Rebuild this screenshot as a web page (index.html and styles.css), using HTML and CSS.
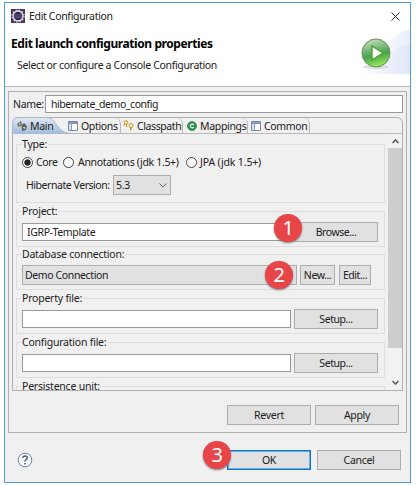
FILE: index.html
```html
<!DOCTYPE html>
<html lang="en">
<head>
<meta charset="utf-8">
<title>Edit Configuration</title>
<link rel="stylesheet" href="styles.css">
</head>
<body>
<main class="window">
  <header class="header">
    <div class="titlebar">
      <svg class="app-icon" width="14" height="14" viewBox="0 0 14 14"><rect width="14" height="14" fill="#49345f"/><circle cx="7" cy="7" r="5" fill="#302b50" stroke="#eee8ef" stroke-width="1.3"/><circle cx="7" cy="7" r="6" fill="none" stroke="#cfc4d3" stroke-width="1.4" stroke-dasharray="1.4 1.74"/><path d="M3.5 5.8h7M3 7.2h8M3.5 8.6h7" stroke="#77739a" stroke-width=".6"/></svg>
      <span class="title">Edit Configuration</span>
      <svg class="close" width="9" height="9" viewBox="0 0 9 9"><path d="M.5.5l8 8M8.5.5l-8 8" stroke="#222" stroke-width="1"/></svg>
    </div>
    <h1>Edit launch configuration properties</h1>
    <p>Select or configure a Console Configuration</p>
    <svg class="banner" width="52" height="48" viewBox="0 0 52 48">
      <defs>
        <linearGradient id="sky" x1="0" x2="1"><stop stop-color="#fff"/><stop offset="1" stop-color="#dfe7f7"/></linearGradient>
        <linearGradient id="ball" x1="0" y1="0" x2="0.25" y2="1"><stop stop-color="#d1e6c9"/><stop offset=".45" stop-color="#77b779"/><stop offset=".65" stop-color="#45a34d"/><stop offset="1" stop-color="#91df5c"/></linearGradient>
        <linearGradient id="arc" x1="0" x2="1"><stop stop-color="#f8fafe"/><stop offset="1" stop-color="#e9effa"/></linearGradient>
      </defs>
      <path d="M17 46Q27 6 52 1v45z" fill="url(#arc)"/>
      <path d="M1 46Q28 39 36 23 42 16 52 16v30z" fill="url(#sky)"/>
      <ellipse cx="18" cy="39" rx="13" ry="2" fill="#dbe0df"/>
      <circle cx="18" cy="25" r="14" fill="url(#ball)" stroke="#688b5a"/>
      <path d="M14 18v14l11-7z" fill="#fff" stroke="#4ca52b" stroke-width="1.4"/>
    </svg>
  </header>

  <section class="panel">
    <div class="name-row"><label class="name-label">Name:</label><div class="input name-input"><span class="name-value">hibernate_demo_config</span></div></div>
    <div class="folder">
      <nav class="tabs">
        <div class="tab main-tab">
          <svg class="tab-shape" width="60" height="17" viewBox="0 0 60 17"><defs><linearGradient id="tab" x2="0" y2="1"><stop stop-color="#dfe9f5"/><stop offset="1" stop-color="#9fbbdc"/></linearGradient></defs><path d="M0 17V6Q0 1 6 .5H34C46 1 43 16 60 16.5z" fill="url(#tab)"/><path d="M.5 17V6Q1 1 6 .5H34C46 1 43 16 60 16.5" fill="none" stroke="#b1b5ba"/></svg>
          <svg class="ico ico-main" width="10" height="10" viewBox="0 0 10 10"><path d="M1 2l3-2 1 4-3 2-2-2z" fill="#6f7070"/><path d="M4.5 4.5L7 2l3 3-1 4-4 1z" fill="#5f6262"/><path d="M2 2.5l1 1M6.5 6l1.5 1.5" stroke="#eadda5" stroke-width="1.5"/></svg>
          <span class="t-main">Main</span>
        </div>
        <div class="tab options-tab"><svg class="ico" width="10" height="10" viewBox="0 0 10 10"><path d="M.5.5h9v9h-9z" fill="#fff" stroke="#7b8aa2"/><path d="M1 1h8v2H1z" fill="#819bc5"/><path d="M1 3h2.5v6H1z" fill="#d7e1ef"/><path d="M3.5 3v6" stroke="#8ba0bd"/></svg><span class="t-options">Options</span></div>
        <div class="tab classpath-tab"><svg class="ico" width="11" height="11" viewBox="0 0 11 11"><g fill="#fff2be" stroke="#cb922c"><path d="M2.5 3.5L.5 6M3.5 4v3"/><circle cx="3" cy="2.5" r="1.8"/><path d="M7.5 7v3.5M8.5 7v2"/><circle cx="8" cy="5.5" r="2"/></g></svg><span class="t-classpath">Classpath</span></div>
        <div class="tab mappings-tab"><svg class="ico" width="10" height="10" viewBox="0 0 10 10"><circle cx="5" cy="5" r="4.5" fill="#2f944f" stroke="#277c42" stroke-width=".7"/><path d="M6.8 3.8Q5.2 2.4 3.8 3.8 2.8 5 3.8 6.2 5.2 7.5 6.8 6.2" fill="none" stroke="#fff" stroke-width="1.1"/></svg><span class="t-mappings">Mappings</span></div>
        <div class="tab common-tab"><svg class="ico" width="10" height="10" viewBox="0 0 10 10"><path d="M.5.5h9v9h-9z" fill="#fff" stroke="#7b8aa2"/><path d="M1 1h8v2H1z" fill="#819bc5"/><path d="M1 3h2.5v6H1z" fill="#d7e1ef"/><path d="M3.5 3v6" stroke="#8ba0bd"/></svg><span class="t-common">Common</span></div>
      </nav>
      <div class="viewport">
        <div class="content">
          <section class="group type-group"><h2>Type:</h2>
            <div class="radios"><i class="radio checked"></i><span class="r-core">Core</span><i class="radio"></i><span class="r-ann">Annotations (jdk 1.5+)</span><i class="radio"></i><span class="r-jpa">JPA (jdk 1.5+)</span></div>
            <div class="version"><span class="version-label">Hibernate Version:</span><div class="select"><span>5.3</span><svg width="8" height="5" viewBox="0 0 8 5"><path d="M.5.5L4 4 7.5.5" fill="none" stroke="#666"/></svg></div></div>
          </section>
          <section class="group project"><h2>Project:</h2><div class="row"><div class="input project-input"><span class="project-value">IGRP-Template</span></div><div class="button browse"><span>Browse...</span></div></div></section>
          <section class="group database"><h2>Database connection:</h2><div class="row"><div class="combo"><span>Demo Connection</span></div><div class="button new"><span>New...</span></div><div class="button edit"><span>Edit...</span></div></div></section>
          <section class="group"><h2>Property file:</h2><div class="row"><div class="input file-input"></div><div class="button setup"><span>Setup...</span></div></div></section>
          <section class="group"><h2>Configuration file:</h2><div class="row"><div class="input file-input"></div><div class="button setup"><span>Setup...</span></div></div></section>
          <section class="group"><h2>Persistence unit:</h2></section>
        </div>
        <div class="scrollbar"><svg width="7" height="5" viewBox="0 0 7 5"><path d="M.5 4L3.5 1l3 3" fill="none" stroke="#555" stroke-width="1.5"/></svg><div class="thumb"></div><svg class="down" width="7" height="5" viewBox="0 0 7 5"><path d="M.5 1l3 3 3-3" fill="none" stroke="#555" stroke-width="1.5"/></svg></div>
      </div>
    </div>
    <div class="panel-actions"><div class="button action"><span>Revert</span></div><div class="button action"><span>Apply</span></div></div>
  </section>
  <footer class="footer">
    <svg width="16" height="16" viewBox="0 0 16 16"><circle cx="8" cy="8" r="6.8" fill="#f7f8fa" stroke="#75849c"/><path d="M5.7 6Q6 3.9 8 3.9 10.4 4 10.3 6 10 7 8.8 7.8 8 8.3 8 9.5" fill="none" stroke="#53647e" stroke-width="1.5"/><circle cx="8" cy="11.7" r=".9" fill="#53647e"/></svg>
    <div class="button ok"><span>OK</span></div><div class="button cancel"><span>Cancel</span></div>
  </footer>
  <span class="badge badge-one">1</span><span class="badge badge-two">2</span><span class="badge badge-three">3</span>
</main>
</body>
</html>
```
FILE: styles.css
```css
* { box-sizing: border-box; }
body { margin: 0; padding: 2px 0 0 4px; height: 486px; overflow: hidden; background: #fff; color: #202020; font: 10.5px/14px "Noto Sans", "Open Sans", sans-serif; letter-spacing: -.33px; white-space: nowrap; }
h1, h2, p { margin: 0; }
svg { display: block; flex: none; }
.window { position: relative; width: 407px; height: 481px; border: 1px solid #4e9edb; background: #f0f0f0; }
.header { position: relative; height: 84px; background: #fff; border-bottom: 1px solid #b8b8b8; }
.titlebar { display: flex; align-items: center; padding: 6px 10px 0 6px; height: 20px; }
.title { margin-left: 4px; }
.close { margin-left: auto; }
h1 { font-size: 12px; line-height: 16px; padding: 13px 0 0 6px; color: #000; letter-spacing: -.42px; }
.header p { padding: 6px 0 0 12px; }
.banner { position: absolute; right: 0; top: 25px; }
.panel { margin: 4px 3px 0; height: 342px; border: 1px solid #b0b0b0; padding: 3px; }
.name-row { display: flex; align-items: center; height: 18px; padding-left: 1px; }
.name-label { width: 32px; }
.input { display: flex; align-items: center; background: #fff; border: 1px solid #999; height: 18px; }
.name-input { width: 359px; padding-left: 5px; letter-spacing: -.45px; }
.folder { width: 391px; height: 274px; margin-top: 4px; border: 1px solid #b0b0b0; border-radius: 6px 6px 0 0; }
.tabs { display: flex; height: 16px; border-bottom: 1px solid #b8b8b8; }
.tab { display: flex; align-items: center; position: relative; border-right: 1px solid #b8b8b8; border-top-right-radius: 6px; height: 15px; }
.main-tab { width: 54px; border: 0; padding-left: 4px; }
.tab-shape { position: absolute; left: -1px; top: -1px; }
.ico, .tab span { position: relative; }
.tab span { margin-left: 3px; }
.options-tab { width: 54px; padding-left: 1px; }
.classpath-tab { width: 62px; padding-left: 2px; letter-spacing: -.4px; }
.mappings-tab { width: 65px; padding-left: 4px; }
.common-tab { width: 62px; padding-left: 3px; }
.viewport { display: flex; height: 256px; overflow: hidden; }
.content { padding: 10px 0 0 3px; width: 375px; }
.group { width: 369px; height: 36px; border: 1px solid #dedede; margin-bottom: 8px; padding: 0 5px; }
.project { margin-bottom: 7px; }
.type-group { height: 59px; }
.group h2 { display: table; font-size: 10.5px; line-height: 13px; font-weight: 400; height: 14px; margin: -7px 0 0 -1px; padding: 0 1px; background: #f0f0f0; letter-spacing: -.22px; }
.row { display: flex; align-items: center; height: 20px; margin-top: 3px; }
.radios { display: flex; align-items: center; height: 14px; margin-top: 3px; }
.radio { flex: none; width: 11px; height: 11px; border: 1px solid #444; border-radius: 50%; background: #fff; }
.checked { background: radial-gradient(circle, #222 0 2.8px, #fff 3.5px); }
.r-core { width: 27px; margin-left: 3px; }
.r-ann { width: 108px; margin-left: 4px; letter-spacing: -.33px; }
.r-jpa { margin-left: 3px; letter-spacing: -.15px; }
.version { display: flex; align-items: center; margin: 6px 0 0 4px; }
.version-label { width: 87px; letter-spacing: -.45px; }
.select { display: flex; align-items: center; justify-content: space-between; width: 58px; height: 20px; border: 1px solid #adadad; background: #e1e1e1; padding: 0 3px 0 2px; }
.project-input { width: 269px; padding-left: 4px; }
.button { display: flex; align-items: center; justify-content: center; height: 20px; border: 1px solid #adadad; background: #e1e1e1; flex: none; letter-spacing: -.45px; }
.browse, .setup { width: 84px; margin-left: 3px; }
.combo { display: flex; align-items: center; width: 275px; height: 20px; border: 1px solid #adadad; background: #e1e1e1; padding-left: 2px; letter-spacing: -.38px; }
.new { width: 35px; margin-left: 3px; }
.edit { width: 32px; margin-left: 4px; }
.file-input { width: 269px; }
.scrollbar { width: 14px; height: 256px; padding-top: 5px; display: flex; flex-direction: column; align-items: center; background: #f2f2f2; }
.thumb { flex: none; width: 14px; height: 200px; margin-top: 4px; background: #cdcdcd; }
.down { margin-top: 32px; }
.panel-actions { display: flex; justify-content: flex-end; gap: 4px; margin: 14px 4px 0 0; }
.action { width: 84px; letter-spacing: -.3px; }
.footer { display: flex; align-items: center; height: 20px; margin: 17px 0 0 12px; }
.ok { width: 84px; margin-left: 194px; border: 1px solid #0078d7; box-shadow: inset 0 0 0 .5px #0078d7; }
.cancel { width: 84px; margin-left: 6px; letter-spacing: -.3px; }
.badge { position: absolute; display: flex; align-items: center; justify-content: center; width: 28px; height: 28px; border-radius: 50%; background: #e84549; color: #fff; font: 20px/28px "Noto Sans", sans-serif; box-shadow: 0 1px 2px #777; }
.badge-one { left: 269px; top: 211px; }
.badge-two { left: 260px; top: 258px; }
.badge-three { left: 198px; top: 438px; }
```
